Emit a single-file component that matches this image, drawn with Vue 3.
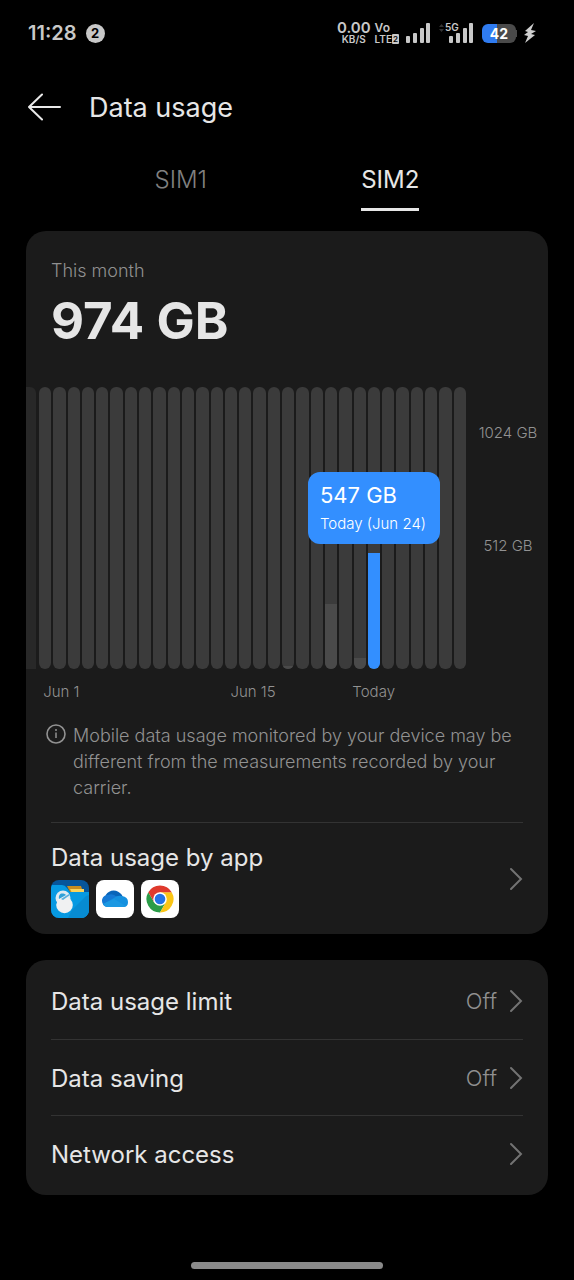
<script setup>
import { ref } from 'vue'

const tabs = ['SIM1', 'SIM2']
const active = ref('SIM2')

const usage = { 18: 1, 21: 23, 23: 4, 24: 41 }
const days = Array.from({ length: 30 }, (_, i) => ({
  day: i + 1,
  percent: usage[i + 1] || 0,
  today: i + 1 === 24
}))

const settings = [
  { label: 'Data usage limit', value: 'Off' },
  { label: 'Data saving', value: 'Off' },
  { label: 'Network access', value: '' }
]
</script>

<template>
  <div class="screen">
    <div class="status">
      <span class="clock">11:28</span>
      <span class="count">2</span>
      <span class="spacer"></span>
      <span class="stack speed"><b>0.00</b><small>KB/S</small></span>
      <span class="stack volte"><b>Vo</b><small>LTE<i>2</i></small></span>
      <svg class="signal" width="25" height="20" viewBox="0 0 25 20" fill="#c8c8c8" aria-hidden="true">
        <rect x="0" y="13" width="4" height="7" rx="1" /><rect x="7" y="10" width="4" height="10" rx="1" />
        <rect x="14" y="5" width="4" height="15" rx="1" /><rect x="20" y="0" width="4" height="20" rx="1" />
      </svg>
      <span class="mobile">
        <svg width="36" height="20" viewBox="0 0 36 20" fill="#c8c8c8" aria-hidden="true">
          <path d="M1 4l2.500-3 2.500 3zM1 6l2.500 3 2.500-3z" fill="#333" />
          <rect x="11" y="13" width="4" height="7" rx="1" /><rect x="18" y="10" width="4" height="10" rx="1" />
          <rect x="25" y="5" width="4" height="15" rx="1" /><rect x="31" y="0" width="4" height="20" rx="1" />
        </svg>
        <em>5G</em>
      </span>
      <span class="battery"><span>42</span></span>
      <svg class="bolt" width="12" height="20" viewBox="0 0 12 20" fill="#d0d0d0" aria-hidden="true">
        <path d="M10 0L1 8l3 1-4 3 4 1-3 7 10-8-4-1 5-3-5-1z" />
      </svg>
    </div>

    <header class="header">
      <button class="back" aria-label="Back">
        <svg width="34" height="28" viewBox="0 0 34 28" fill="none" stroke="#e8e8e8" stroke-width="2" stroke-linecap="round" stroke-linejoin="round">
          <path d="M32 14H1M14 1.500L1 14l13 12.500" />
        </svg>
      </button>
      <h1>Data usage</h1>
    </header>

    <nav class="tabs" role="tablist">
      <button
        v-for="tab in tabs"
        :key="tab"
        class="tab"
        :class="{ active: tab === active }"
        role="tab"
        :aria-selected="tab === active"
        @click="active = tab"
      ><span>{{ tab }}</span></button>
    </nav>

    <main>
      <section class="card summary">
        <p class="period">This month</p>
        <p class="total">974 GB</p>

        <div class="chart">
          <div class="previous"></div>
          <div class="days">
            <div v-for="d in days" :key="d.day" class="day">
              <div class="track">
                <div class="fill" :class="{ today: d.today }" :style="{ height: d.percent + '%' }"></div>
              </div>
              <div v-if="d.today" class="tooltip">
                <strong>547 GB</strong>
                <span>Today (Jun 24)</span>
              </div>
            </div>
          </div>
          <div class="scale">
            <span>1024 GB</span>
            <span>512 GB</span>
          </div>
        </div>
        <div class="dates">
          <span class="first">Jun 1</span>
          <span class="middle">Jun 15</span>
          <span class="current">Today</span>
        </div>

        <div class="note">
          <svg width="20" height="22" viewBox="0 0 20 22" fill="none" stroke="#929292" aria-hidden="true">
            <circle cx="10" cy="11" r="9" stroke-width="1.600" />
            <path d="M10 9.500V15" stroke-width="1.500" />
            <circle cx="10" cy="7" r="1" fill="#929292" stroke="none" />
          </svg>
          <p>Mobile data usage monitored by your device may be different from the measurements recorded by your carrier.</p>
        </div>

        <button class="apps">
          <span class="apps-body">
            <span class="label">Data usage by app</span>
            <span class="icons">
              <svg width="38" height="38" viewBox="0 0 38 38" aria-hidden="true">
                <rect width="38" height="38" rx="8" fill="#07559a" />
                <path d="M16 6h14l1 3v3H19z" fill="#c88d20" />
                <path d="M19 9h14v4H21z" fill="#fbd45b" />
                <path d="M0 8a8 8 0 0 1 1-3h10q3 0 5 3l3 4h19v18a8 8 0 0 1-8 8H8a8 8 0 0 1-8-8z" fill="#0699e2" />
                <path d="M21 30l14-14 3-1v15a8 8 0 0 1-8 8H17z" fill="#078bd2" />
                <circle cx="12" cy="18" r="7.500" fill="#dfeaf1" />
                <circle cx="13.500" cy="25" r="8.300" fill="#f0f1f2" />
                <path d="M8 19c-1-5 3-7 7-4z" fill="#2fa0d8" />
                <path d="M10 19l8-5 1 1-7 5z" fill="#5aaedb" />
                <path d="M4 21l2 1-1 2z" fill="#0699e2" />
              </svg>
              <svg width="38" height="38" viewBox="0 0 38 38" aria-hidden="true">
                <rect width="38" height="38" rx="8" fill="#fff" />
                <path d="M9 17a9 9 0 0 1 15-4q3 2 3 5l-10 2z" fill="#0864b9" />
                <path d="M12 15q5-2 9 2l-9 10a6 6 0 0 1-6-6c0-4 3-6 6-6z" fill="#1478d4" />
                <path d="M18 18q3-3 8-2 6 1 6 6c0 4-2 5-5 5H12q-4 0-5-3z" fill="#1490df" />
                <path d="M7 24l11-5 12 7q-1 1-3 1H12q-3 0-5-3z" fill="#1b98e2" />
              </svg>
              <svg width="38" height="38" viewBox="0 0 38 38" aria-hidden="true">
                <rect width="38" height="38" rx="8" fill="#fff" />
                <path d="M7.300 12.250A13.500 13.500 0 0 0 19 32.500L25 22H13z" fill="#2a9c47" />
                <path d="M30.700 12.250A13.500 13.500 0 0 1 19 32.500L25 22 19 12.250z" fill="#fbc515" />
                <path d="M7.300 12.250A13.500 13.500 0 0 1 30.700 12.250H19L13 22z" fill="#df3a2d" />
                <circle cx="19" cy="19" r="6.800" fill="#fff" />
                <circle cx="19" cy="19" r="5.300" fill="#2373e5" />
              </svg>
            </span>
          </span>
          <svg class="chevron" width="14" height="24" viewBox="0 0 14 24"><path d="M2 2l10 10L2 22" /></svg>
        </button>
      </section>

      <section class="card settings">
        <button v-for="s in settings" :key="s.label" class="row">
          <span class="label">{{ s.label }}</span>
          <span class="value">{{ s.value }}</span>
          <svg class="chevron" width="14" height="24" viewBox="0 0 14 24"><path d="M2 2l10 10L2 22" /></svg>
        </button>
      </section>
    </main>

    <div class="home"></div>
  </div>
</template>

<style>
body {
  background: #000;
}
</style>

<style scoped>
* {
  box-sizing: border-box;
}

.screen {
  display: flex;
  flex-direction: column;
  min-height: 100vh;
  background: #000;
  color: #e6e6e6;
  font-family: Inter, "Liberation Sans", sans-serif;
}

p,
h1 {
  margin: 0;
}

button {
  padding: 0;
  border: 0;
  background: none;
  color: inherit;
  font: inherit;
  text-align: left;
  cursor: pointer;
}

.status {
  display: flex;
  align-items: center;
  height: 66px;
  padding: 0 38px 0 28px;
  color: #c8c8c8;
}

.clock {
  font-size: 20px;
  font-weight: 600;
}

.count {
  width: 19px;
  height: 19px;
  margin-left: 9px;
  border-radius: 50%;
  background: #c8c8c8;
  color: #000;
  font-size: 13px;
  font-weight: 700;
  line-height: 19px;
  text-align: center;
}

.spacer {
  flex: 1;
}

.stack {
  display: flex;
  flex-direction: column;
  align-items: center;
  font-weight: 600;
}

.stack b {
  font-size: 15px;
  font-weight: 600;
  line-height: 12px;
}

.stack small {
  font-size: 10px;
  line-height: 10px;
}

.volte {
  align-items: flex-start;
  margin-left: 4px;
}

.volte b {
  font-size: 12px;
}

.volte small {
  display: flex;
}

.volte i {
  width: 7px;
  border-radius: 1px;
  background: #c8c8c8;
  color: #000;
  font-size: 8px;
  font-style: normal;
  line-height: 10px;
  text-align: center;
}

.signal {
  margin-left: 7px;
}

.mobile {
  position: relative;
  display: flex;
  margin-left: 7px;
}

.mobile em {
  position: absolute;
  top: -1px;
  left: 7px;
  font-size: 10px;
  font-style: normal;
  font-weight: 600;
  line-height: 11px;
}

.battery {
  position: relative;
  display: flex;
  width: 34px;
  height: 19px;
  margin: 0 1px 0 8px;
  border-radius: 6px;
  background: linear-gradient(90deg, #2f7bf0 44%, #4a4a4a 44%);
  color: #fff;
  font-size: 14px;
  font-weight: 700;
  line-height: 19px;
}

.battery::after {
  content: "";
  position: absolute;
  top: 6px;
  right: -1px;
  width: 1px;
  height: 7px;
  background: #4a4a4a;
}

.battery span {
  flex: 1;
  text-align: center;
}

.bolt {
  margin-left: 7px;
}

.header {
  display: flex;
  align-items: center;
  gap: 27px;
  height: 82px;
  padding: 0 28px;
}

.back {
  display: flex;
}

h1 {
  padding-top: 2px;
  font-size: 27px;
  font-weight: 400;
  line-height: 32px;
}

.tabs {
  display: flex;
  height: 83px;
  padding: 0 79px 0 76px;
}

.tab {
  flex: 1;
  height: 63px;
  color: #808080;
  font-size: 24px;
  font-weight: 300;
  text-align: center;
}

.tab span {
  display: inline-block;
  height: 63px;
  line-height: 64px;
}

.tab.active {
  color: #e6e6e6;
  font-weight: 400;
}

.tab.active span {
  border-bottom: 3px solid #e6e6e6;
}

main {
  display: flex;
  flex-direction: column;
  gap: 26px;
  padding: 0 26px;
}

.card {
  overflow: hidden;
  border-radius: 20px;
  background: #1b1b1b;
}

.period {
  padding: 28px 25px 0;
  color: #909090;
  font-size: 18px;
  font-weight: 300;
  line-height: 24px;
}

.total {
  padding: 8px 25px 0;
  font-size: 51px;
  font-weight: 700;
  line-height: 60px;
}

.chart {
  display: flex;
  height: 282px;
  margin-top: 36px;
}

.previous {
  width: 10px;
  margin-right: 3px;
  border-radius: 0 6px 0 0;
  background: #282828;
}

.days {
  display: flex;
  flex: 1;
  gap: 2px;
}

.day {
  position: relative;
  flex: 1;
}

.track {
  display: flex;
  align-items: flex-end;
  height: 100%;
  overflow: hidden;
  border-radius: 6px;
  background: #3b3b3b;
}

.fill {
  width: 100%;
  background: #4a4a4a;
}

.fill.today {
  background: #338fff;
}

.tooltip {
  position: absolute;
  z-index: 1;
  bottom: 125px;
  left: 50%;
  display: flex;
  flex-direction: column;
  width: 132px;
  height: 72px;
  margin-left: -66px;
  padding: 8px 0 0 12px;
  border-radius: 12px;
  background: #338fff;
  color: #fff;
  white-space: nowrap;
}

.tooltip strong {
  font-size: 22px;
  font-weight: 400;
  line-height: 30px;
}

.tooltip span {
  font-size: 15px;
  font-weight: 300;
  line-height: 28px;
}

.scale {
  display: flex;
  flex-direction: column;
  gap: 93px;
  width: 82px;
  padding: 36px 0 0 2px;
  color: #929292;
  font-size: 15px;
  font-weight: 300;
  line-height: 20px;
  text-align: center;
}

.dates {
  display: grid;
  grid-template-columns: repeat(30, minmax(0, 1fr));
  margin: 13px 82px 0 14px;
  color: #929292;
  font-size: 15px;
  font-weight: 300;
  line-height: 20px;
  white-space: nowrap;
}

.dates span {
  text-align: center;
}

.first {
  grid-column: 1 / 4;
}

.middle {
  grid-column: 14 / 18;
}

.current {
  grid-column: 22 / 27;
}

.note {
  display: flex;
  gap: 7px;
  margin: 21px 20px 0;
  color: #929292;
  font-size: 18px;
  font-weight: 300;
  line-height: 26px;
}

.note svg {
  flex: none;
}

.apps {
  display: flex;
  align-items: center;
  justify-content: space-between;
  width: calc(100% - 50px);
  height: 112px;
  margin: 21px 25px 0;
  border-top: 1px solid #333;
}

.apps-body {
  display: flex;
  flex-direction: column;
  gap: 6px;
}

.label {
  padding-top: 2px;
  font-size: 24px;
  font-weight: 400;
  line-height: 32px;
}

.icons {
  display: flex;
  gap: 7px;
}

.chevron {
  fill: none;
  stroke: #737373;
  stroke-width: 2;
  stroke-linecap: round;
}

.settings {
  padding: 3px 25px 4px;
}

.row {
  display: flex;
  align-items: center;
  width: 100%;
  height: 76px;
}

.row + .row {
  border-top: 1px solid #333;
}

.value {
  margin: 0 12px 0 auto;
  color: #909090;
  font-size: 22px;
  font-weight: 300;
}

.home {
  width: 192px;
  height: 7px;
  margin: auto auto 11px;
  border-radius: 4px;
  background: #8a8a8a;
}
</style>
